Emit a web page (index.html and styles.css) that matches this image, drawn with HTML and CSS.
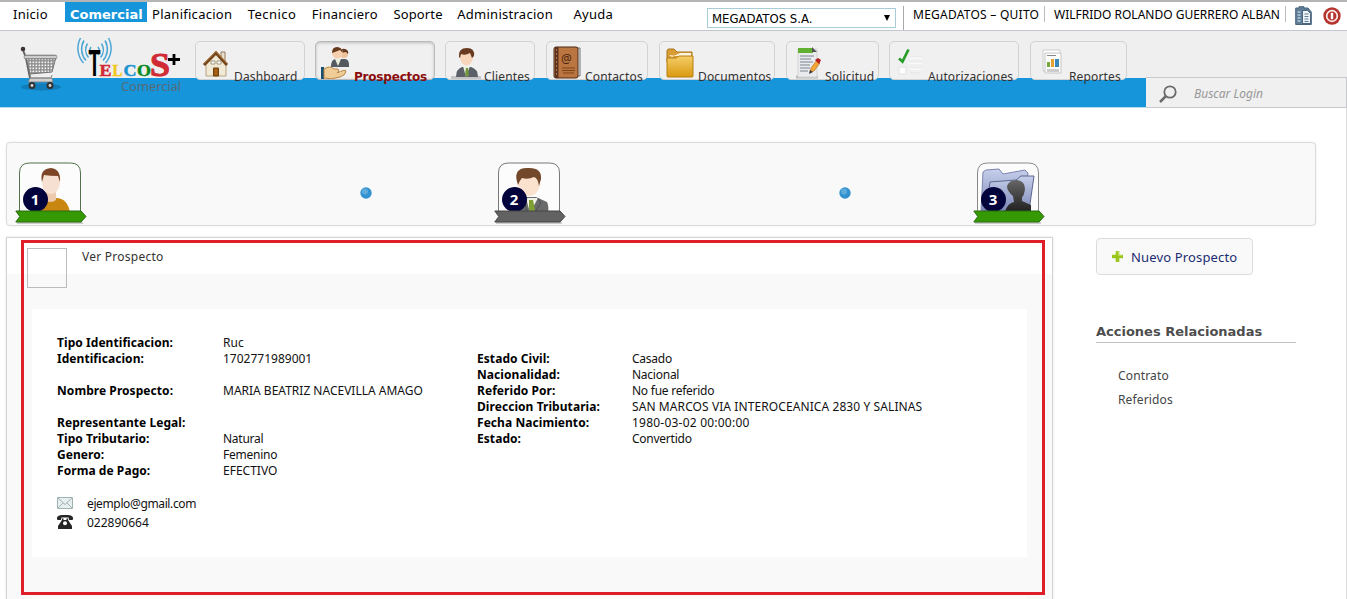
FILE: index.html
```html
<!DOCTYPE html>
<html lang="es">
<head>
<meta charset="utf-8">
<title>Telcos - Comercial</title>
<link rel="stylesheet" href="styles.css">
</head>
<body>
<div class="topbar">
  <nav class="menu">
    <a class="inicio">Inicio</a><a class="current">Comercial</a><a>Planificacion</a><a class="tecnico">Tecnico</a><a>Financiero</a><a class="soporte">Soporte</a><a>Administracion</a><a class="ayuda">Ayuda</a>
  </nav>
  <div class="company"><span>MEGADATOS S.A.</span><i class="caret"></i></div>
  <div class="session">
    <span class="office">MEGADATOS – QUITO</span>
    <span class="user">WILFRIDO ROLANDO GUERRERO ALBAN</span>
    <svg class="doc" width="17" height="20" viewBox="0 0 17 20">
      <path d="M.7 2H4V.7h5V2h4l3.300 4v12.500H.7z" fill="#5f7c95" stroke="#4b657e"/>
      <path d="M7.500 4.500h5l3 3V17.500h-8z" fill="#eef4f8" stroke="#4b657e"/>
      <path d="M2.500 6h3M2.500 9h3M2.500 12h3M2.500 15h3" stroke="#b5d0e2" stroke-width="1.500"/>
      <path d="M9.500 8h4M9.500 10.500h4M9.500 13h4M9.500 15.500h4" stroke="#5d7890"/>
    </svg>
    <svg class="power" width="18" height="18" viewBox="0 0 18 18">
      <circle cx="9" cy="9" r="8.700" fill="#b5362f"/><circle cx="9" cy="9" r="5.300" fill="#b8352f" stroke="#fbeeee" stroke-width="1.700"/><path d="M9 5.800v6.400" stroke="#fff" stroke-width="2.400"/>
    </svg>
  </div>
</div>

<header class="header">
  <svg class="cart" width="45" height="48" viewBox="0 0 45 48">
    <defs>
      <linearGradient id="metal" x2="0" y2="1"><stop offset="0" stop-color="#777"/><stop offset=".5" stop-color="#e8e8e8"/><stop offset="1" stop-color="#808080"/></linearGradient>
      <pattern id="mesh" width="3" height="3" patternUnits="userSpaceOnUse"><rect width="3" height="3" fill="#8b8b8b"/><rect x=".5" y=".5" width="1.700" height="1.700" fill="#f5f5f5"/></pattern>
    </defs>
    <ellipse cx="24" cy="41" rx="20" ry="3.500" fill="#0c5f93" opacity=".45"/>
    <path d="M6 4l3 8 4 20" fill="none" stroke="#666" stroke-width="2"/>
    <circle cx="6" cy="3" r="2.300" fill="#40303a"/>
    <path d="M9 11h30l-4 15-22 2z" fill="url(#mesh)" stroke="#707070"/>
    <rect x="7" y="9" width="33" height="4" rx="2" fill="url(#metal)" stroke="#777" stroke-width=".6"/>
    <path d="M13 32h22l1 4H11z" fill="#d0d0d0" stroke="#777" stroke-width=".8"/>
    <path d="M13 29l1 3h20l1-3" fill="none" stroke="#888"/>
    <circle cx="15" cy="39.500" r="3.500" fill="#333"/><circle cx="15" cy="39.500" r="1.400" fill="#ddd"/>
    <circle cx="33" cy="39.500" r="3.500" fill="#333"/><circle cx="33" cy="39.500" r="1.400" fill="#ddd"/>
  </svg>
  <div class="logo">
    <svg width="106" height="43" viewBox="0 0 106 43">
      <g fill="none" stroke="#4ca6d6" stroke-width="1.500">
        <path d="M15 12a7 7 0 0 0 0 8M11.500 8.500a12 12 0 0 0 1 14M8 5.500a17 17 0 0 0 2 20M4.500 3a22 22 0 0 0 3 25"/>
        <path d="M22 12a7 7 0 0 1 0 8M25.500 8.500a12 12 0 0 1-1 14M29 5.500a17 17 0 0 1-2 20M32.500 3a22 22 0 0 1-3 25"/>
      </g>
      <text class="lt" x="12.500" y="41" textLength="12" lengthAdjust="spacingAndGlyphs">T</text>
      <g class="ls">
        <text x="23.500" y="41" textLength="12" lengthAdjust="spacingAndGlyphs" fill="#d02b35" stroke="#d02b35">E</text>
        <text x="36.500" y="41" textLength="10" lengthAdjust="spacingAndGlyphs" fill="#f2c61b" stroke="#f2c61b">L</text>
        <text x="47.500" y="41" textLength="13" lengthAdjust="spacingAndGlyphs" fill="#1c93d2" stroke="#1c93d2">C</text>
        <text x="61" y="41" textLength="14" lengthAdjust="spacingAndGlyphs" fill="#0c8a1d" stroke="#0c8a1d">O</text>
        <text class="big" x="74" y="41" textLength="20" lengthAdjust="spacingAndGlyphs" fill="#d02b35" stroke="#d02b35">S</text>
      </g>
      <path d="M92 24.500h12M98 19v11" stroke="#000" stroke-width="2.800"/>
    </svg>
    <span>Comercial</span>
  </div>

  <nav class="tabs">
    <a class="tab t1"><svg width="38" height="37" viewBox="0 0 38 37">
      <path d="M25 10h4v9h-4z" fill="#e9e0d0" stroke="#80603a" stroke-width=".8"/>
      <path d="M10 20L20 11l10 9v14H10z" fill="#f0e9d5" stroke="#b8a47c"/>
      <path d="M8 23L20 11l11 12" fill="none" stroke="#72451d" stroke-width="3"/>
      <path d="M8 21.500L20 9.500l11 12" fill="none" stroke="#b87c3a" stroke-width="1"/>
      <path d="M15 19h4v3h-4zM21 19h4v3h-4z" fill="#fff" stroke="#8d8067" stroke-width=".8"/>
      <path d="M17.500 26h5v8h-5z" fill="#a35c13" stroke="#6d3c0b"/>
    </svg><span>Dashboard</span></a>
    <a class="tab t2 on"><svg width="38" height="37" viewBox="0 0 38 37">
      <path d="M15 25q0-8 5-8h9q4 0 4 6v2z" fill="#555a60"/>
      <circle cx="28" cy="12" r="4" fill="#efc19a"/><path d="M24 11q1-5 5-4 4 1 3 5l-2-2z" fill="#65391b"/>
      <path d="M19 17l3 7 3-7z" fill="#e7efdc"/><circle cx="21.500" cy="11" r="5.500" fill="#f5cfae"/>
      <path d="M16 11q0-6 5-6t6 6l-3-3q-5 2-8 3z" fill="#65391b"/>
      <path d="M5 25h3v12H5z" fill="#175073"/><path d="M8 27q6-4 10 0h4q2 2-1 4 8-4 9-2 0 4-6 6-9 3-16 1z" fill="#f0cc97" stroke="#b98545"/>
    </svg><span>Prospectos</span></a>
    <a class="tab t3"><svg width="38" height="37" viewBox="0 0 38 37">
      <path d="M5 34h30v3H5z" fill="#c4c4c4"/>
      <path d="M10 35q0-8 6-10h9q7 2 7 10z" fill="#5b6068"/><path d="M17 24l3 11 4-11z" fill="#edf2df"/><path d="M20 26h2l1 7-2 2-2-2z" fill="#72963b"/>
      <ellipse cx="20.500" cy="15" rx="6.500" ry="8.500" fill="#f7d5bb"/><path d="M13 15q-1-9 8-9 8 0 7 8l-2 2-2-5q-5 3-9 1l-1 4z" fill="#683a20"/>
    </svg><span>Clientes</span></a>
    <a class="tab t4"><svg width="38" height="37" viewBox="0 0 38 37">
      <path d="M29 6h4v28h-4z" fill="#e8e8e8" stroke="#555" stroke-width=".8"/>
      <rect x="7" y="5" width="24" height="31" rx="2" fill="#bb7540" stroke="#4a2a18"/><path d="M8 5h3.500v31H8z" fill="#5c3320"/><path d="M9.500 7v27" stroke="#aa754b" stroke-dasharray="2 2"/>
      <text x="14" y="20.500" font-size="12" fill="#4a2611">@</text><path d="M15 26h13M15 28.500h13M16 31h11" stroke="#7c4218"/>
    </svg><span>Contactos</span></a>
    <a class="tab t5"><svg width="38" height="37" viewBox="0 0 38 37">
      <defs><linearGradient id="fold" x2="0" y2="1"><stop stop-color="#f6ce69"/><stop offset="1" stop-color="#d99910"/></linearGradient></defs>
      <path d="M7 9q0-2 2-2h5l3 3h15v10H7z" fill="#d89e35" stroke="#a9741b"/><path d="M9 13l3 2 8-4h11v5z" fill="#fff5df"/>
      <path d="M7 16h9l3-2h14v20q0 1-1 1H8q-1 0-1-1z" fill="url(#fold)" stroke="#b67c10"/>
    </svg><span>Documentos</span></a>
    <a class="tab t6"><svg width="38" height="37" viewBox="0 0 38 37">
      <path d="M9 35h22" stroke="#bbb" stroke-width="3"/><path d="M11 7h19v28H11z" fill="#e9ebee" stroke="#d3d3d3"/>
      <path d="M11 6h15v5H11z" fill="#60b032"/><path d="M25 5l5 5h-5z" fill="#555"/>
      <path d="M13 14h14M13 17h11M13 20h13M13 23h10M13 26h10M13 29h8" stroke="#7a838c"/>
      <path d="M23 30l1-4 6-8 3 3-6 8z" fill="#f4a637" stroke="#ae6713" stroke-width=".6"/><path d="M28 18l3-2 3 2-2 4z" fill="#b81c1c"/><path d="M22 32l1-4 3 2z" fill="#333"/>
    </svg><span>Solicitud</span></a>
    <a class="tab t7"><svg width="38" height="37" viewBox="0 0 38 37">
      <path d="M9 25h7v7H9z" fill="#fcfcfc" stroke="#e3e3e3"/><path d="M20 15h12M18 20h14M20 26h12M20 31h10" stroke="#e4e4e4"/><path d="M20 16h12M18 21h14M20 27h12" stroke="#fff"/>
      <path d="M9 16.500l3.500 3 6-12" fill="none" stroke="#279d27" stroke-width="2.700"/>
    </svg><span>Autorizaciones</span></a>
    <a class="tab t8"><svg width="38" height="37" viewBox="0 0 38 37">
      <path d="M12 8h17v21H12z" fill="#fff" stroke="#ccc"/><path d="M14 11h16v20H14z" fill="#fdfdfd" stroke="#c5c5c5"/><path d="M16 13.500h9" stroke="#888"/>
      <path d="M16 20h3v5h-3z" fill="#77a83b"/><path d="M20 17h3v8h-3z" fill="#e4a12e"/><path d="M24 17h4v8h-4z" fill="#3787bb"/><path d="M16 27h12v3H16z" fill="#ccc"/>
    </svg><span>Reportes</span></a>
  </nav>

  <div class="search">
    <svg width="18" height="18" viewBox="0 0 18 18"><circle cx="11" cy="7" r="5.700" fill="none" stroke="#6b6b6b" stroke-width="1.800"/><path d="M7 11l-6 6" stroke="#6b6b6b" stroke-width="2.500"/></svg>
    <span>Buscar Login</span>
  </div>
</header>

<main class="page">
  <ol class="steps">
    <li>
      <svg class="step" width="74" height="64" viewBox="0 0 74 64">
        <path d="M4.500 50V11q0-10 10-10h41q10 0 10 10v39" fill="#fcfcfc" stroke="#53714d"/>
        <path d="M18 51q2-14 12-15h12q11 1 13 15z" fill="#c98712"/><path d="M30 30h11v8q-5 4-11 0z" fill="#edc9ae"/>
        <ellipse cx="36" cy="20" rx="9" ry="12" fill="#f6e0d1"/><path d="M27 20q-3-13 9-14 10 1 9 14l-2-6q-8 0-14-1z" fill="#7d4526"/>
        <circle cx="20.500" cy="37.500" r="12.500" fill="#04043c"/><text class="num" x="20" y="43">1</text>
        <path d="M2 61h66" stroke="#ccc" stroke-width="2"/>
        <path d="M.8 49H66l5 5.500-5 5.500H.8l4-5.500z" fill="#349902" stroke="#2b6b12"/>
      </svg>
      <svg class="dot" width="12" height="12" viewBox="0 0 12 12"><circle cx="6" cy="6" r="5.700" fill="#3291cf"/><circle cx="5" cy="4.500" r="3" fill="#5cabdc"/></svg>
    </li>
    <li>
      <svg class="step" width="74" height="64" viewBox="0 0 74 64">
        <path d="M4.500 50V11q0-10 10-10h41q10 0 10 10v39" fill="#fcfcfc" stroke="#777"/>
        <path d="M24 51V40l8-5h10l11 5q2 4 1 11z" fill="#686a6c"/><path d="M32 36l4 15 8-15z" fill="#f1f2e8"/><path d="M35 38h4l2 10-3 3-3-3z" fill="#809f32"/><path d="M44 36l3 5-7 10M33 36l-3 5 4 10" fill="none" stroke="#4c4e50"/>
        <ellipse cx="35" cy="21" rx="11" ry="13" fill="#fae2ce"/><path d="M24 23q-6-17 9-17 15-1 14 11l-2 7q-1-8-5-9-6 3-12 1-2 2-4 7z" fill="#73482a"/>
        <circle cx="20.500" cy="37.500" r="12.500" fill="#04043c"/><text class="num" x="20" y="43">2</text>
        <path d="M2 61h66" stroke="#ccc" stroke-width="2"/>
        <path d="M.8 49H66l5 5.500-5 5.500H.8l4-5.500z" fill="#626262" stroke="#454545"/>
      </svg>
      <svg class="dot" width="12" height="12" viewBox="0 0 12 12"><circle cx="6" cy="6" r="5.700" fill="#3291cf"/><circle cx="5" cy="4.500" r="3" fill="#5cabdc"/></svg>
    </li>
    <li>
      <svg class="step" width="74" height="64" viewBox="0 0 74 64">
        <defs><linearGradient id="file" x2="0" y2="1"><stop stop-color="#c6cfea"/><stop offset="1" stop-color="#7d88b8"/></linearGradient>
        <linearGradient id="shade" x2="0" y2="1"><stop stop-color="#666"/><stop offset="1" stop-color="#222"/></linearGradient></defs>
        <path d="M4.500 50V11q0-10 10-10h41q10 0 10 10v39" fill="#fcfcfc" stroke="#888"/>
        <path d="M8 49L10 10l3-2 13-1 4 5 22-4 3 3-4 38z" fill="url(#file)" stroke="#7b84b0"/><path d="M13 49l4-29 26-2 5-4 13 0-5 35z" fill="url(#file)" stroke="#5d668f"/>
        <path d="M32 49q3-8 9-9l-1-6q-6-5-6-10 2-6 10-6 8 1 8 9-1 7-3 8v4l9 4v6z" fill="url(#shade)"/>
        <circle cx="20.500" cy="37.500" r="12.500" fill="#04043c"/><text class="num" x="20" y="43">3</text>
        <path d="M2 61h66" stroke="#ccc" stroke-width="2"/>
        <path d="M.8 49H66l5 5.500-5 5.500H.8l4-5.500z" fill="#349902" stroke="#2b6b12"/>
      </svg>
    </li>
  </ol>

  <div class="columns">
    <section class="record">
      <div class="title"><div class="thumb"></div><h1>Ver Prospecto</h1></div>
      <div class="panel">
        <div class="data">
          <dl>
            <dt>Tipo Identificacion:</dt><dd>Ruc</dd>
            <dt>Identificacion:</dt><dd>1702771989001</dd>
            <dt></dt><dd></dd>
            <dt>Nombre Prospecto:</dt><dd>MARIA BEATRIZ NACEVILLA AMAGO</dd>
            <dt></dt><dd></dd>
            <dt>Representante Legal:</dt><dd></dd>
            <dt>Tipo Tributario:</dt><dd class="word">Natural</dd>
            <dt>Genero:</dt><dd class="word">Femenino</dd>
            <dt>Forma de Pago:</dt><dd>EFECTIVO</dd>
          </dl>
          <dl class="second">
            <dt>Estado Civil:</dt><dd class="word">Casado</dd>
            <dt>Nacionalidad:</dt><dd class="word">Nacional</dd>
            <dt>Referido Por:</dt><dd class="word">No fue referido</dd>
            <dt>Direccion Tributaria:</dt><dd class="address">SAN MARCOS VIA INTEROCEANICA 2830 Y SALINAS</dd>
            <dt>Fecha Nacimiento:</dt><dd class="date">1980-03-02 00:00:00</dd>
            <dt>Estado:</dt><dd class="word">Convertido</dd>
          </dl>
        </div>
        <ul class="contact">
          <li><svg width="16" height="16" viewBox="0 0 16 16"><path d="M.5 1.500h15v11H.5z" fill="#e6efed" stroke="#9fb3b2"/><path d="M1 2l7 6.500L15 2M1 12l5-5M15 12l-5-5" fill="none" stroke="#9fb3b2"/></svg><span class="mail">ejemplo@gmail.com</span></li>
          <li><svg width="16" height="16" viewBox="0 0 16 16"><path d="M0 4V2.500Q1 0 5 0h6q4 0 5 2.500V4q0 1-1 1h-3l-.5-2.500h-7L4 5H1Q0 5 0 4z" fill="#262626"/><path d="M5 3.500h1.500V5h3V3.500H11V5l4 6v3H1v-3l4-6z" fill="#262626"/><circle cx="8" cy="8.300" r="2" fill="#fff"/></svg><span>022890664</span></li>
        </ul>
      </div>
      <div class="panel next"></div>
      <div class="highlight"></div>
    </section>
    <aside class="side">
      <a class="button"><svg width="11" height="11" viewBox="0 0 11 11"><path d="M3.700 0h3.600v3.700H11v3.600H7.300V11H3.700V7.300H0V3.700h3.700z" fill="#9ac61c"/><path d="M4.500 1h2v3.500H10" fill="none" stroke="#bbdc55"/></svg>Nuevo Prospecto</a>
      <h2>Acciones Relacionadas</h2>
      <a>Contrato</a><a>Referidos</a>
    </aside>
  </div>
</main>
</body>
</html>
```
FILE: styles.css
```css
* { box-sizing: border-box; margin: 0; padding: 0; }
body { height: 599px; overflow: hidden; background: #fff; font: 12px/16px "Noto Sans", sans-serif; color: #111; }
svg { display: block; flex: none; }
ul, ol { list-style: none; }

.topbar { display: flex; height: 31px; border-top: 2px solid #b5b5b5; border-bottom: 1px solid #c2c7cf; white-space: nowrap; }
.menu { display: flex; width: 707px; font-size: 13px; letter-spacing: .27px; line-height: 25px; color: #000; }
.menu a { margin-right: 15.500px; }
.menu .inicio { width: 35px; margin: 0 17px 0 13px; }
.menu .current { width: 82px; height: 20px; margin-right: 5px; padding-left: 5px; background: #1695da; color: #fff; font: bold 13px/25px "DejaVu Sans", sans-serif; letter-spacing: 0; }
.menu .tecnico { letter-spacing: .45px; }
.menu .soporte { margin-right: 14.500px; letter-spacing: .15px; }
.menu .ayuda { margin-left: 5px; }
.company { display: flex; justify-content: space-between; align-items: center; width: 189px; height: 20px; margin-top: 6px; padding: 2px 5px 0 4px; border: 1px solid #a9cdd6; font: 13px/16px "DejaVu Sans Condensed", sans-serif; color: #000; }
.caret { border: solid transparent; border-width: 6px 3.500px 0; border-top-color: #000; margin-top: -2px; }
.session { display: flex; margin-left: 7px; line-height: 23px; color: #000; }
.session span { height: 16px; margin-top: 4px; border-right: 1px solid #bbb; line-height: 18px; }
.session .office { width: 142px; height: 24px; padding-left: 9px; border-left: 1px solid #aaa; border-right: 0; letter-spacing: .25px; }
.session .user { width: 242px; padding-left: 9px; border-left: 1px solid #bbb; margin-left: -1px; }
.doc { margin: 4px 0 0 9px; }
.power { margin: 5px 0 0 11px; }

.header { display: flex; height: 77px; background: linear-gradient(#efefef 47px, #1695da 47px, #1695da 76px, #b3dcf1 76px); }
.cart { margin: 15px 0 0 17px; }
.logo { width: 118px; margin: 4px 0 0 14px; }
.logo svg { overflow: visible; }
.logo span { display: block; margin: 1px 0 0 45px; font-size: 13px; line-height: 14px; letter-spacing: -.1px; color: #566b78; }
.lt { font: bold 37px "Liberation Sans", sans-serif; fill: #000; }
.ls { font: bold 17px "Liberation Serif", serif; stroke-width: .5px; }
.ls .big { font-size: 34px; stroke-width: 1px; }
.tabs { display: flex; width: 952px; padding: 10px 0 0 1px; }
.tab { display: flex; height: 39px; border: 1px solid #d2d2d2; border-radius: 5px; background: #f0f0f0; color: #333; letter-spacing: .15px; white-space: nowrap; }
.tab span { margin-top: 27px; line-height: 16px; }
.tab.on { border-color: #bbb; box-shadow: inset 0 1px 3px #bbb; color: #8b0d0d; font: bold 12px/16px "DejaVu Sans", sans-serif; letter-spacing: -.2px; }
.t1 { width: 110px; margin-right: 10px; }
.t2 { width: 120px; margin-right: 10px; }
.t3 { width: 90px; margin-right: 11px; }
.t4 { width: 102px; margin-right: 11px; }
.t5 { width: 116px; margin-right: 11px; }
.t6 { width: 93px; margin-right: 10px; }
.t7 { width: 130px; margin-right: 11px; }
.t8 { width: 97px; }
.search { display: flex; align-items: center; align-self: flex-end; gap: 17px; flex: 1; height: 31px; margin-top: 46px; padding: 2px 0 0 13px; border: 1px solid #c7c9cd; border-left: 0; background: #f0f0f0; color: #989898; font-style: italic; }

.page { height: 491px; padding: 34px 0 0 6px; border-right: 1px solid #ddd; overflow: hidden; }
.steps { display: flex; width: 1310px; height: 84px; padding: 19px 0 0 8px; border: 1px solid #dcdcdc; border-radius: 4px; background: #f9f9f9; box-shadow: 0 0 2px #e5e5e5; }
.steps li { display: flex; flex: none; width: 479px; }
.steps li:last-child { width: 200px; }
.dot { margin: 25px 0 0 271px; }
.num { font: bold 15px "Noto Sans", sans-serif; fill: #fff; text-anchor: middle; }

.columns { display: flex; margin-top: 11px; }
.record { position: relative; width: 1047px; height: 362px; padding: 0 25px; border: 1px solid #d5d5d5; border-bottom: 0; background: linear-gradient(#fff 36px, #f9f9f9 36px); box-shadow: 0 0 2px #ddd; }
.title { display: flex; height: 71px; margin-left: -5px; padding-top: 10px; }
.thumb { width: 40px; height: 40px; border: 1px solid #bcbcbc; }
.title h1 { margin: 1px 0 0 15px; font-size: 12px; font-weight: normal; letter-spacing: .25px; color: #333; }
.panel { height: 248px; padding: 26px 25px 0; background: #fff; }
.next { height: 2px; margin-top: 40px; padding: 0; }
.highlight { position: absolute; left: 14px; top: 2px; width: 1024px; height: 355px; border: 3px solid #de1f29; }
.data { display: flex; }
.data dl { display: grid; grid-template-columns: 166px 254px; grid-auto-rows: 16px; white-space: nowrap; }
.data .second { grid-template-columns: 155px 320px; margin-top: 16px; align-self: flex-start; }
dt { font-weight: bold; color: #000; letter-spacing: .06px; }
dd.address { letter-spacing: .09px; }
dd.word { letter-spacing: -.25px; }
dd.date { letter-spacing: .22px; }
.contact { margin-top: 15px; }
.contact li { display: flex; align-items: center; gap: 14px; height: 19px; }
.contact .mail { letter-spacing: -.37px; }

.side { margin-left: 43px; color: #444; }
.button { display: flex; align-items: center; gap: 8px; width: 157px; height: 37px; margin-top: 1px; padding-left: 15px; border: 1px solid #dcdcdc; border-radius: 4px; background: #f9f9f9; font-size: 13px; letter-spacing: .15px; color: #1c2c72; }
.side h2 { width: 200px; height: 20px; margin: 48px 0 25px; border-bottom: 1px solid #c2c2c2; font: bold 13px/18px "DejaVu Sans", sans-serif; color: #4d4d4d; }
.side h2 ~ a { display: block; height: 24px; padding-left: 22px; letter-spacing: .15px; }
```
